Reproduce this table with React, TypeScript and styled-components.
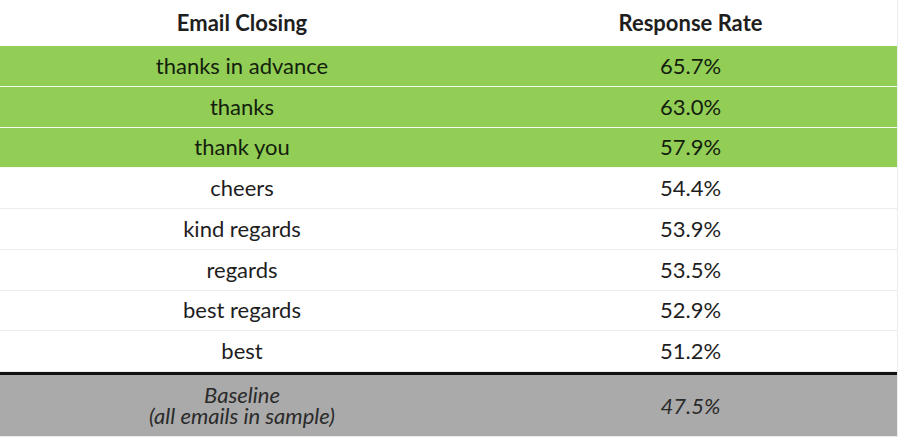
import React from "react";
import styled, { createGlobalStyle } from "styled-components";

const Global = createGlobalStyle`
  html, body { margin: 0; padding: 0; background: #ffffff; }
  body { font-family: Lato, "Open Sans", "Liberation Sans", sans-serif; }
`;

const Wrap = styled.div`
  width: 898px;
  border-right: 1px solid #ececec;
  box-sizing: border-box;
`;

const Grid = styled.div`
  display: grid;
  grid-template-columns: 484px 413px;
`;

type Tone = "head" | "green" | "plain" | "base";

const Row = styled.div<{ $tone: Tone }>`
  display: contents;
  & > div {
    height: ${(p) => (p.$tone === "head" ? "46px" : p.$tone === "base" ? "65px" : "40.75px")};
    background: ${(p) =>
      p.$tone === "green" ? "#92ce56" : p.$tone === "base" ? "#aaaaaa" : "#ffffff"};
    color: ${(p) => (p.$tone === "green" ? "#13200c" : p.$tone === "base" ? "#2b2b2b" : "#1e1e1e")};
    border-top: ${(p) => (p.$tone === "base" ? "3px solid #111111" : "none")};
    border-bottom: ${(p) =>
      p.$tone === "green"
        ? "1.5px solid #f4fbec"
        : p.$tone === "plain" || p.$tone === "base"
        ? "1px solid #ececec"
        : "none"};
    font-weight: ${(p) => (p.$tone === "head" ? 700 : 400)};
    font-style: ${(p) => (p.$tone === "base" ? "italic" : "normal")};
  }
`;

const Cell = styled.div`
  box-sizing: border-box;
  display: flex;
  flex-direction: column;
  align-items: center;
  justify-content: center;
  text-align: center;
  font-size: 22px;
  padding-bottom: 1px;
`;

const Line = styled.span`
  display: block;
  line-height: 21px;
`;

const rows = [
  ["thanks in advance", "65.7%", "green"],
  ["thanks", "63.0%", "green"],
  ["thank you", "57.9%", "green"],
  ["cheers", "54.4%", "plain"],
  ["kind regards", "53.9%", "plain"],
  ["regards", "53.5%", "plain"],
  ["best regards", "52.9%", "plain"],
  ["best", "51.2%", "plain"],
] as const;

export default function App() {
  return (
    <>
      <Global />
      <Wrap>
        <Grid>
          <Row $tone="head">
            <Cell>Email Closing</Cell>
            <Cell>Response Rate</Cell>
          </Row>
          {rows.map(([name, rate, tone]) => (
            <Row key={name} $tone={tone as Tone}>
              <Cell>{name}</Cell>
              <Cell>{rate}</Cell>
            </Row>
          ))}
          <Row $tone="base">
            <Cell>
              <Line>Baseline</Line>
              <Line>(all emails in sample)</Line>
            </Cell>
            <Cell>47.5%</Cell>
          </Row>
        </Grid>
      </Wrap>
    </>
  );
}
